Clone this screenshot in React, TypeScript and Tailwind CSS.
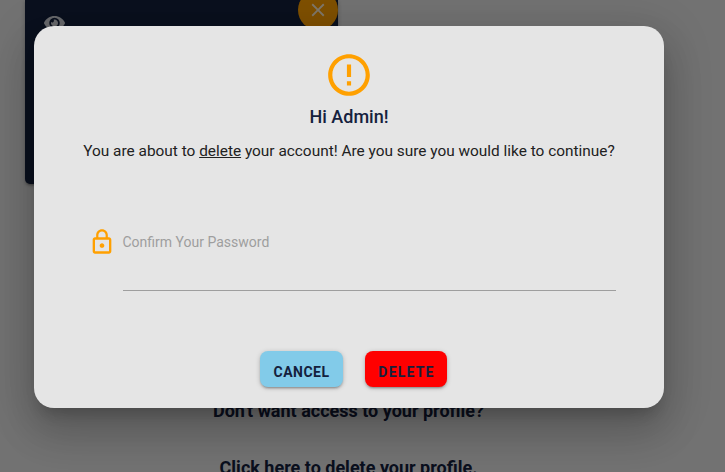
import React from "react";

function WarningIcon() {
  return (
    <svg className="h-[50px] w-[50px] fill-[#ffa000]" viewBox="0 0 24 24">
      <path d="M11 15h2v2h-2zm0-8h2v6h-2zm.99-5C6.47 2 2 6.48 2 12s4.47 10 9.99 10C17.52 22 22 17.52 22 12S17.52 2 11.99 2zM12 20c-4.42 0-8-3.58-8-8s3.58-8 8-8 8 3.58 8 8-3.58 8-8 8z" />
    </svg>
  );
}

function LockIcon() {
  return (
    <svg className="mt-[3px] h-[28px] w-[28px] shrink-0 fill-[#ffa000]" viewBox="0 0 24 24">
      <path d="M12 17c1.1 0 2-.9 2-2s-.9-2-2-2-2 .9-2 2 .9 2 2 2zm6-9h-1V6c0-2.76-2.24-5-5-5S7 3.24 7 6v2H6c-1.1 0-2 .9-2 2v10c0 1.1.9 2 2 2h12c1.1 0 2-.9 2-2V10c0-1.1-.9-2-2-2zM8.9 6c0-1.71 1.39-3.1 3.1-3.1s3.1 1.39 3.1 3.1v2H8.9V6zM18 20H6V10h12v10z" />
    </svg>
  );
}

function EyeIcon() {
  return (
    <svg className="h-[20px] w-[21px] fill-white/80" viewBox="0 0 576 512">
      <path d="M572.52 241.4C518.29 135.59 410.93 64 288 64S57.68 135.64 3.48 241.41a32.35 32.35 0 0 0 0 29.19C57.71 376.41 165.07 448 288 448s230.32-71.64 284.52-177.41a32.35 32.35 0 0 0 0-29.19zM288 400a144 144 0 1 1 144-144 143.93 143.93 0 0 1-144 144zm0-240a95.31 95.31 0 0 0-25.31 3.79 47.85 47.85 0 0 1-66.9 66.9A95.78 95.78 0 1 0 288 160z" />
    </svg>
  );
}

function ProfilePage() {
  return (
    <div className="h-[472px] w-[725px] overflow-hidden bg-[#e5e5e5]">
      <div className="ml-[25px] flex h-[184px] w-[313px] items-start justify-between rounded-b-[5px] bg-[#14213d] pl-[19px] shadow-[0_2px_2px_0_rgba(0,0,0,0.14),0_3px_1px_-2px_rgba(0,0,0,0.12),0_1px_5px_0_rgba(0,0,0,0.2)]">
        <div className="pt-[13px]">
          <EyeIcon />
        </div>
        <div className="-mt-[10px] flex h-[40px] w-[40px] items-center justify-center rounded-full bg-[#ffa000]">
          <svg className="h-[22px] w-[22px] fill-white/85" viewBox="0 0 24 24">
            <path d="M19 6.41L17.59 5 12 10.59 6.41 5 5 6.41 10.59 12 5 17.59 6.41 19 12 13.41 17.59 19 19 17.59 13.41 12 19 6.41z" />
          </svg>
        </div>
      </div>
      <div className="mt-[215px] w-[697px] text-center text-[18px] leading-[24px] font-bold text-[#14213d]">
        <p>Don't want access to your profile?</p>
        <p className="mt-[33px]">Click here to delete your profile.</p>
      </div>
    </div>
  );
}

export default function App() {
  return (
    <div className="relative h-[472px] w-[725px] overflow-hidden font-[Roboto,sans-serif]">
      <ProfilePage />
      <div className="absolute inset-0 bg-black/50">
        <div className="mt-[26px] ml-[34px] flex h-[382px] w-[630px] flex-col items-center rounded-[20px] bg-[#e5e5e5] pt-[24px] shadow-[0_24px_38px_3px_rgba(0,0,0,0.14),0_9px_46px_8px_rgba(0,0,0,0.12),0_11px_15px_-7px_rgba(0,0,0,0.2)]">
          <WarningIcon />
          <h1 className="mt-[5px] text-[18px] leading-[24px] font-medium text-[#14213d]">Hi Admin!</h1>
          <p className="mt-[10px] text-[15.4px] leading-[24px] whitespace-nowrap text-[#212121]">
            You are about to <u>delete</u> your account! Are you sure you would like to continue?
          </p>
          <div className="mt-[62px] ml-[5px] flex w-[528px] items-start gap-[7px]">
            <LockIcon />
            <label className="flex h-[66px] flex-1 border-b border-[#9e9e9e] pt-[7px] text-[14px] leading-[20px] text-[#9e9e9e]">
              Confirm Your Password
            </label>
          </div>
          <div className="mt-[60px] ml-[9px] flex gap-[22px] text-[14px] leading-[36px] font-bold tracking-[0.5px] text-[#14213d]">
            <button className="flex h-[36px] w-[83px] justify-center rounded-[8px] bg-[#82cbe9] pt-[3px] shadow-[0_2px_2px_0_rgba(0,0,0,0.14),0_3px_1px_-2px_rgba(0,0,0,0.12),0_1px_5px_0_rgba(0,0,0,0.2)]">
              CANCEL
            </button>
            <button className="flex h-[36px] w-[82px] justify-center rounded-[8px] bg-[#ff0000] pt-[3px] pl-px tracking-[1.2px] shadow-[0_2px_2px_0_rgba(0,0,0,0.14),0_3px_1px_-2px_rgba(0,0,0,0.12),0_1px_5px_0_rgba(0,0,0,0.2)]">
              DELETE
            </button>
          </div>
        </div>
      </div>
    </div>
  );
}
